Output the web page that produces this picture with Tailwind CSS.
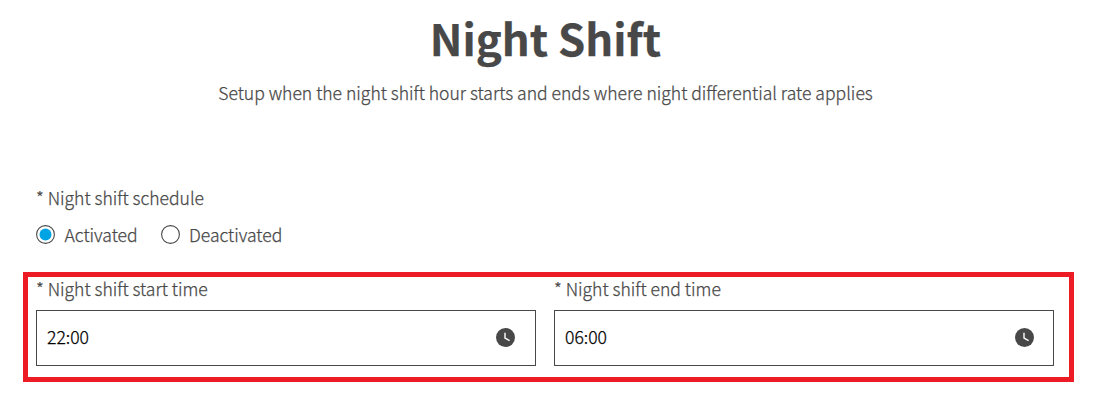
<!DOCTYPE html>
<html lang="en">
<head>
<meta charset="utf-8">
<title>Night Shift</title>
<script src="https://cdn.jsdelivr.net/npm/@tailwindcss/browser@4"></script>
</head>
<body class="bg-white font-['Noto_Sans_CJK_SC',sans-serif] text-[17.56px] font-light leading-6 text-[#484848] [-webkit-text-stroke:0.25px_currentColor]">
<main class="h-[405px] overflow-hidden pt-[7px]">
  <header class="flex flex-col items-center pr-[13px] whitespace-nowrap">
    <h1 class="text-[43.7px] font-bold leading-[60px]">Night Shift</h1>
    <p class="mt-[14px]">Setup when the night shift hour starts and ends where night differential rate applies</p>
  </header>
  <section class="mt-[81px] pl-9 whitespace-nowrap">
    <p>* Night shift schedule</p>
    <div class="mt-[13px] flex items-center">
      <label class="flex w-[124.5px] items-center gap-[9.5px]">
        <svg class="-mt-px size-[19px] shrink-0" viewBox="0 0 19 19"><circle cx="9.5" cy="9.5" r="8.9" fill="white" stroke="#484848" stroke-width="1.1"/><circle cx="9.5" cy="9.5" r="6" fill="#00a4e4"/></svg>
        <span>Activated</span>
      </label>
      <label class="flex items-center gap-[9.5px]">
        <svg class="-mt-px size-[19px] shrink-0" viewBox="0 0 19 19"><circle cx="9.5" cy="9.5" r="8.9" fill="white" stroke="#484848" stroke-width="1.1"/></svg>
        <span>Deactivated</span>
      </label>
    </div>
  </section>
  <section class="mt-[25px] ml-[23px] flex h-[110px] w-[1051px] gap-[18px] border-5 border-[#ed1c24] pl-2 whitespace-nowrap">
    <div class="w-[500px]">
      <p>* Night shift start time</p>
      <div class="mt-[9px] flex h-14 items-center justify-between border border-[#484848] pr-5 pb-0.5 pl-[10px]">
        <span class="text-black">22:00</span>
        <svg class="size-[19px]" viewBox="0 0 19 19"><circle cx="9.5" cy="9.5" r="9.5" fill="#484848"/><path d="M9 4.8V10l4.6 2.7" fill="none" stroke="white" stroke-width="1.4"/></svg>
      </div>
    </div>
    <div class="w-[500px]">
      <p>* Night shift end time</p>
      <div class="mt-[9px] flex h-14 items-center justify-between border border-[#484848] pr-[19px] pb-0.5 pl-[10px]">
        <span class="text-black">06:00</span>
        <svg class="size-[19px]" viewBox="0 0 19 19"><circle cx="9.5" cy="9.5" r="9.5" fill="#484848"/><path d="M9 4.8V10l4.6 2.7" fill="none" stroke="white" stroke-width="1.4"/></svg>
      </div>
    </div>
  </section>
</main>
</body>
</html>
